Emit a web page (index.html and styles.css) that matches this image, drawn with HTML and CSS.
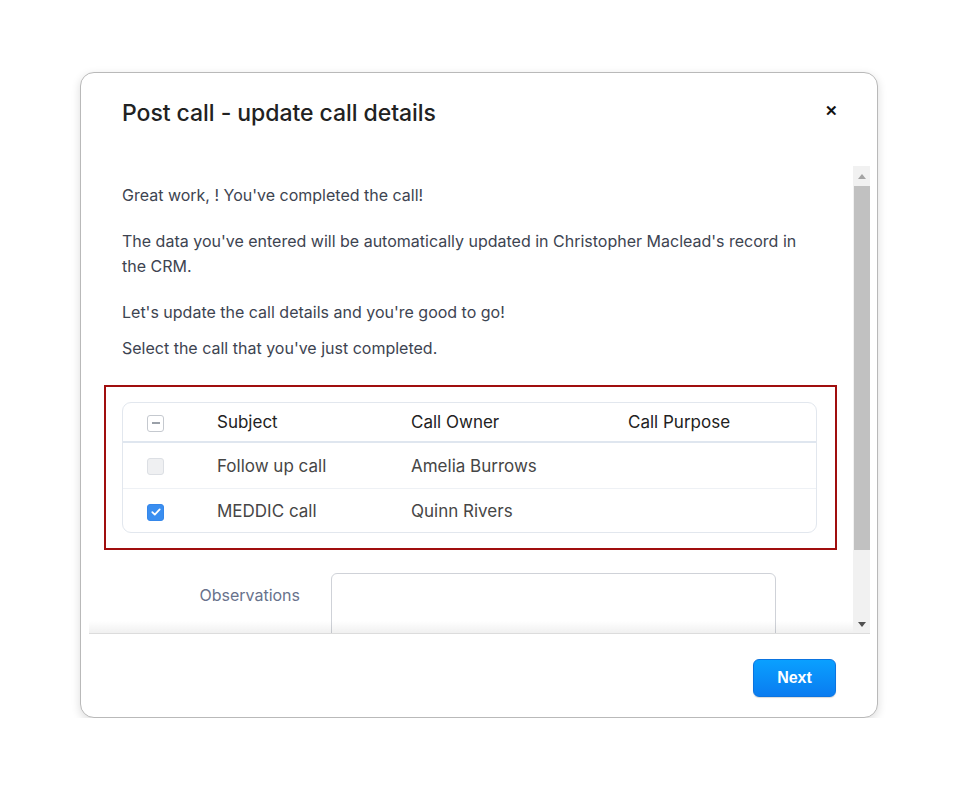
FILE: index.html
```html
<!DOCTYPE html>
<html>
<head>
<meta charset="utf-8">
<link rel="stylesheet" href="styles.css">
</head>
<body>
<div class="page">
  <div class="modal">
    <div class="modal-header">
      <h1 class="title">Post call - update call details</h1>
      <span class="close">&#x2715;</span>
    </div>
    <div class="modal-body">
      <div class="content">
        <p class="p1">Great work, ! You've completed the call!</p>
        <p class="p2">The data you've entered will be automatically updated in Christopher Maclead's record in the CRM.</p>
        <p class="p3">Let's update the call details and you're good to go!</p>
        <p class="p4">Select the call that you've just completed.</p>
        <div class="highlight">
          <div class="table">
            <div class="row head">
              <div class="c-check"><span class="cb cb-minus"></span></div>
              <div class="c-subj">Subject</div>
              <div class="c-owner">Call Owner</div>
              <div class="c-purpose">Call Purpose</div>
            </div>
            <div class="row">
              <div class="c-check"><span class="cb cb-off"></span></div>
              <div class="c-subj">Follow up call</div>
              <div class="c-owner">Amelia Burrows</div>
              <div class="c-purpose"></div>
            </div>
            <div class="row last">
              <div class="c-check"><span class="cb cb-on"><svg width="12" height="12" viewBox="0 0 12 12"><path d="M2.3 6.2 L4.8 8.6 L9.7 3.4" fill="none" stroke="#fff" stroke-width="1.8" stroke-linecap="round" stroke-linejoin="round"/></svg></span></div>
              <div class="c-subj">MEDDIC call</div>
              <div class="c-owner">Quinn Rivers</div>
              <div class="c-purpose"></div>
            </div>
          </div>
        </div>
        <div class="field">
          <label class="field-label">Observations</label>
          <div class="textarea"></div>
        </div>
      </div>
      <div class="scrollbar">
        <div class="arrow up"></div>
        <div class="thumb"></div>
        <div class="track-rest"></div>
        <div class="arrow down"></div>
      </div>
    </div>
    <div class="modal-footer">
      <button class="btn-next">Next</button>
    </div>
  </div>
</div>
</body>
</html>
```
FILE: styles.css
```css
* { box-sizing: border-box; }
html, body { margin: 0; padding: 0; background: #fff; }
body { font-family: Inter, "Noto Sans", sans-serif; }
.page { padding: 72px 0 0 80px; }
.modal {
  width: 798px;
  height: 646px;
  border: 1px solid #b9b9b9;
  border-radius: 14px;
  box-shadow: 0 3px 10px rgba(0,0,0,0.14);
  display: flex;
  flex-direction: column;
  overflow: hidden;
  background: #fff;
}
.modal-header {
  height: 93px;
  display: flex;
  align-items: flex-start;
  justify-content: space-between;
  padding: 26px 39px 0 41px;
  flex: none;
}
.title {
  margin: 0;
  font-size: 23px;
  line-height: 28px;
  font-weight: 500;
  color: #222;
  letter-spacing: -0.05px;
}
.close { font-size: 15px; line-height: 24px; font-weight: 700; color: #111; }
.modal-body {
  height: 468px;
  flex: none;
  display: flex;
  margin: 0 7px 0 8px;
  border-bottom: 1px solid #dcdcdc;
  position: relative;
}
.modal-body::after {
  content: "";
  position: absolute;
  left: 0; right: 17px; bottom: 0;
  height: 12px;
  background: linear-gradient(to bottom, rgba(0,0,0,0), rgba(0,0,0,0.06));
}
.content {
  flex: 1;
  overflow: hidden;
  padding: 17px 0 0 33px;
  color: #3d4451;
  font-size: 16px;
}
.content p { margin: 0; line-height: 25px; width: 690px; }
.p2 { margin-top: 21px !important; }
.p3 { margin-top: 21px !important; }
.p4 { margin-top: 11px !important; }
.highlight {
  margin: 24px 0 0 -18px;
  width: 733px;
  height: 165px;
  border: 2px solid #a00e0e;
  padding: 15px 18px 0 16px;
}
.table {
  border: 1px solid #e2e7ee;
  border-radius: 9px;
  height: 131px;
}
.row {
  display: flex;
  align-items: center;
  height: 46px;
  border-bottom: 1px solid #eef1f5;
  font-size: 17px;
  color: #464646;
}
.row.head { height: 40px; border-bottom: 2px solid #dfe6ef; color: #222; }
.row.last { border-bottom: none; height: 44px; }
.c-check { width: 94px; padding-left: 24px; display: flex; align-items: center; }
.c-subj { width: 194px; }
.c-owner { width: 217px; }
.c-purpose { flex: 1; }
.cb {
  width: 17px; height: 17px;
  border-radius: 3px;
  display: flex; align-items: center; justify-content: center;
  margin-top: 2px;
}
.cb-minus { border: 1.5px solid #c5c9cf; background: #fff; position: relative; }
.cb-minus::after { content: ""; width: 8px; height: 1.5px; background: #9aa0a8; }
.cb-off { border: 1px solid #dcdfe4; background: #eff0f2; }
.cb-on { background: #3a8ef0; border: 1px solid #3587ea; }
.field {
  display: flex;
  margin-top: 23px;
}
.field-label {
  width: 178px;
  text-align: right;
  color: #68728c;
  font-size: 16px;
  padding-top: 12px;
}
.textarea {
  margin-left: 31px;
  width: 445px;
  height: 100px;
  border: 1px solid #cfd2d8;
  border-radius: 6px;
}
.scrollbar {
  width: 17px;
  flex: none;
  background: #f1f1f1;
  display: flex;
  flex-direction: column;
}
.arrow { height: 20px; flex: none; display: flex; align-items: center; justify-content: center; }
.arrow.up::before {
  content: ""; border-left: 4px solid transparent; border-right: 4px solid transparent;
  border-bottom: 5px solid #a3a3a3;
}
.arrow.down { height: 17px; }
.arrow.down::before {
  content: ""; border-left: 4px solid transparent; border-right: 4px solid transparent;
  border-top: 5px solid #505050;
}
.thumb { height: 364px; margin-left: 1px; background: #c1c1c1; flex: none; }
.track-rest { flex: 1; }
.modal-footer {
  flex: 1;
  display: flex;
  justify-content: flex-end;
  align-items: flex-start;
  padding: 25px 41px 0 0;
}
.btn-next {
  width: 83px;
  height: 38px;
  border: 1px solid #0b74e0;
  border-radius: 6px;
  background: linear-gradient(to bottom, #0aa0ff, #0a7cf0);
  color: #fff;
  font-family: "Liberation Sans", Arial, sans-serif;
  font-weight: 700;
  font-size: 16px;
  box-shadow: 0 1px 1px rgba(0,0,0,0.15);
}
```
